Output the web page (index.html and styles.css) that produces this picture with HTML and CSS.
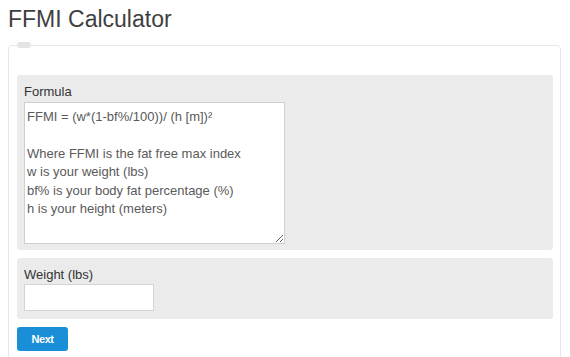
FILE: index.html
```html
<!DOCTYPE html>
<html lang="en">
<head>
  <meta charset="UTF-8">
  <title>FFMI Calculator</title>
  <link rel="stylesheet" href="styles.css">
</head>
<body>
  <h1 class="page-title">FFMI Calculator</h1>

  <fieldset class="calc-box">
    <legend class="calc-legend"></legend>

    <div class="calc-group">
      <label for="formula">Formula</label>
      <textarea id="formula" class="formula-text" readonly>FFMI = (w*(1-bf%/100))/ (h [m])²

Where FFMI is the fat free max index
w is your weight (lbs)
bf% is your body fat percentage (%)
h is your height (meters)</textarea>
    </div>

    <div class="calc-group calc-group-input">
      <label for="weight">Weight (lbs)</label>
      <input type="text" id="weight" class="calc-input">
    </div>

    <button type="button" class="next-btn">Next</button>
  </fieldset>
</body>
</html>
```

FILE: styles.css
```css
body {
  font-family: "Liberation Sans", Arial, sans-serif;
  background: #fff;
  margin: 6px 9px 0 8px;
  padding: 0;
}
.page-title {
  margin: 0;
  font-size: 23px;
  line-height: 26px;
  font-weight: normal;
  color: #3f3f3f;
}
.calc-box {
  margin: 10px 0 0 0;
  padding: 27px 7px 12px 8px;
  border: 1px solid #e8e8e8;
  border-radius: 4px;
  min-width: 0;
}
.calc-legend {
  width: 14px;
  height: 6px;
  padding: 0;
  background: #e4e4e4;
  border-radius: 3px;
}
.calc-group {
  background: #ebebeb;
  border-radius: 3px;
  padding: 8px 7px 6px 7px;
  font-size: 13px;
  line-height: 18.57px;
}
.calc-group label {
  display: block;
  color: #333;
}
.calc-group-input {
  margin-top: 8px;
  padding-bottom: 8px;
}
.formula-text {
  display: block;
  box-sizing: border-box;
  width: 261px;
  height: 142px;
  margin: 0;
  padding: 5px 2px 3px 2px;
  border: 1px solid #cfcfcf;
  font-family: "Liberation Sans", Arial, sans-serif;
  font-size: 13px;
  line-height: 18.57px;
  color: #5a5a5a;
  background: #fff;
}
.calc-input {
  display: block;
  box-sizing: border-box;
  width: 130px;
  height: 27px;
  margin: 0;
  border: 1px solid #d4d4d4;
  background: #fff;
}
.next-btn {
  display: block;
  margin-top: 8px;
  width: 51px;
  height: 24px;
  padding: 0;
  border: none;
  border-radius: 3px;
  background: #1a8fd8;
  color: #fff;
  font-family: "Liberation Sans", Arial, sans-serif;
  font-size: 11px;
  font-weight: bold;
  letter-spacing: -0.4px;
  cursor: pointer;
}
```
